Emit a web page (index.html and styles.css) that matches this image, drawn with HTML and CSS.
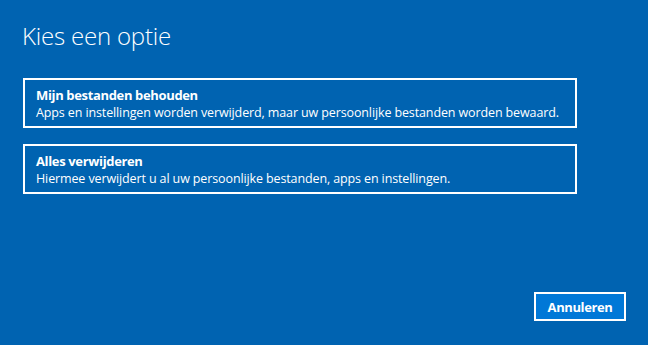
FILE: index.html
```html
<!DOCTYPE html>
<html lang="nl">
<head>
<meta charset="utf-8">
<title>Kies een optie</title>
<link rel="stylesheet" href="styles.css">
</head>
<body>
<main class="page">
  <h1 class="title">Kies een optie</h1>
  <div class="options">
    <button class="option">
      <span class="option-title">Mijn bestanden behouden</span>
      <span class="option-desc">Apps en instellingen worden verwijderd, maar uw persoonlijke bestanden worden bewaard.</span>
    </button>
    <button class="option">
      <span class="option-title">Alles verwijderen</span>
      <span class="option-desc">Hiermee verwijdert u al uw persoonlijke bestanden, apps en instellingen.</span>
    </button>
  </div>
  <div class="footer">
    <button class="cancel">Annuleren</button>
  </div>
</main>
</body>
</html>
```

FILE: styles.css
```css
html, body {
  margin: 0;
  padding: 0;
  background: #0063b1;
}
body {
  font-family: "Open Sans", "Noto Sans", sans-serif;
  color: #ffffff;
}
.page {
  box-sizing: border-box;
  width: 648px;
  height: 345px;
  display: flex;
  flex-direction: column;
  padding: 19px 22px 24px 23px;
}
.title {
  margin: 0 0 0 -1px;
  font-weight: 300;
  font-size: 24px;
  line-height: 34px;
  letter-spacing: -0.2px;
}
.options {
  margin-top: 25px;
  display: flex;
  flex-direction: column;
  gap: 16px;
  width: 554px;
}
.option {
  box-sizing: border-box;
  height: 50px;
  display: flex;
  flex-direction: column;
  align-items: flex-start;
  justify-content: center;
  padding: 1px 11px 0;
  border: 2px solid #ffffff;
  background: transparent;
  color: #ffffff;
  font-family: inherit;
  text-align: left;
  cursor: pointer;
}
.option-title {
  font-weight: 700;
  font-size: 13px;
  line-height: 18px;
  letter-spacing: -0.35px;
}
.option-desc {
  font-weight: 400;
  font-size: 12.5px;
  line-height: 17px;
  letter-spacing: -0.12px;
}
.footer {
  margin-top: auto;
  display: flex;
  justify-content: flex-end;
}
.cancel {
  box-sizing: border-box;
  width: 92px;
  height: 29px;
  border: 2px solid #ffffff;
  background: #0078d7;
  color: #ffffff;
  font-family: inherit;
  font-weight: 700;
  font-size: 13px;
  letter-spacing: -0.4px;
  padding: 0;
}
```
